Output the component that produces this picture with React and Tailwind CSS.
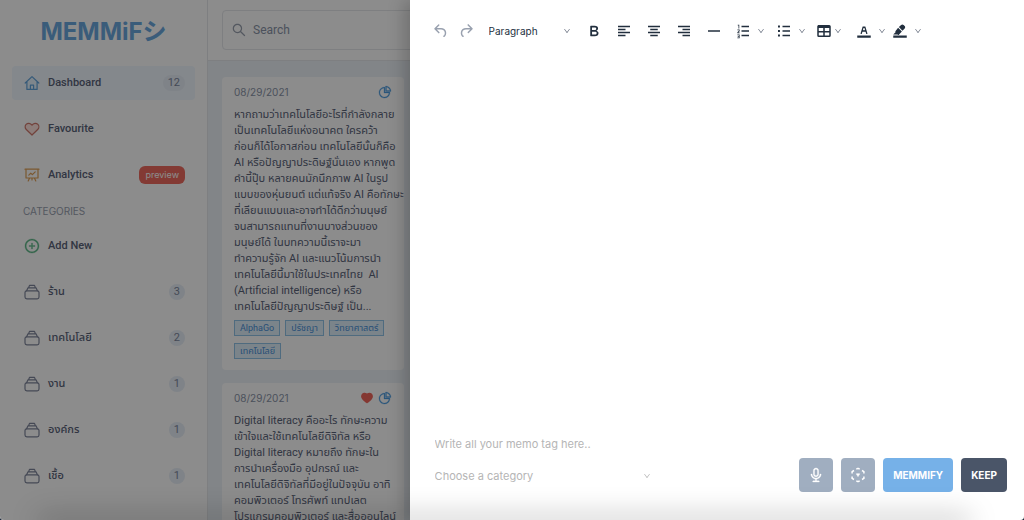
import { AiFillHeart, AiOutlinePlusCircle, AiOutlinePieChart, AiOutlineSearch, AiOutlineDown, AiOutlineAudio } from "react-icons/ai";

const Outline = ({ children, className = "" }) => (
  <svg viewBox="0 0 16 16" className={`w-4 h-4 ${className}`} fill="none" stroke="currentColor" strokeWidth="1.2" strokeLinejoin="round" strokeLinecap="round">
    {children}
  </svg>
);

const HomeIcon = () => (
  <Outline className="text-[#62a4dc]">
    <path d="M3 6.6 8 2l5 4.6v7.6H3z" fill="#e6f4ff" stroke="none" />
    <path d="M1.2 8 8 1.6 14.8 8M2.9 6.8v7.6h10.2V6.8M6.4 14.2v-4h3.2v4" />
  </Outline>
);

const HeartIcon = () => (
  <Outline className="text-[#d0786c]">
    <path d="M8 14 2.3 8.5C.8 7 .8 4.7 2.1 3.4 3.7 1.8 6.5 2 8 4.2 9.5 2 12.3 1.8 13.9 3.4c1.3 1.3 1.3 3.600-.2 5.100z" fill="#ffe4df" />
  </Outline>
);

const ChartIcon = () => (
  <Outline className="text-[#e0a057]">
    <path d="M1 2.2h14M2 2.2h12v8.800H2zM5.600 11l-1.400 3M10.400 11l1.400 3M8 11v2M4.800 8.200l2-2 1.600 1.400 2.800-2.800" />
  </Outline>
);

const StackIcon = () => (
  <Outline className="text-[#7f869c]">
    <rect x="1" y="6.8" width="14" height="8" rx="1.8" />
    <path d="M2.6 6.8 4 3.8h8l1.4 3M4.6 3.8l.9-2.4h5l.9 2.4" />
  </Outline>
);

const menu = [
  { label: "Dashboard", icon: HomeIcon, count: 12, active: true },
  { label: "Favourite", icon: HeartIcon },
  { label: "Analytics", icon: ChartIcon, preview: true },
];

const categories = [
  { label: "ร้าน", count: 3 },
  { label: "เทคโนโลยี", count: 2 },
  { label: "งาน", count: 1 },
  { label: "องค์กร", count: 1 },
  { label: "เชื้อ", count: 1 },
];

const memos = [
  {
    date: "08/29/2021",
    fav: false,
    lines: [
      "หากถามว่าเทคโนโลยีอะไรที่กำลังกลาย",
      "เป็นเทคโนโลยีแห่งอนาคต ใครคว้า",
      "ก่อนก็ได้โอกาสก่อน เทคโนโลยีนั้นก็คือ",
      "AI หรือปัญญาประดิษฐ์นั่นเอง หากพูด",
      "คำนี้ปุ๊บ หลายคนมักนึกภาพ AI ในรูป",
      "แบบของหุ่นยนต์ แต่แท้จริง AI คือทักษะ",
      "ที่เลียนแบบและอาจทำได้ดีกว่ามนุษย์",
      "จนสามารถแทนที่งานบางส่วนของ",
      "มนุษย์ได้ ในบทความนี้เราจะมา",
      "ทำความรู้จัก AI และแนวโน้มการนำ",
      "เทคโนโลยีนี้มาใช้ในประเทศไทย  AI",
      "(Artificial intelligence) หรือ",
      "เทคโนโลยีปัญญาประดิษฐ์ เป็น...",
    ],
    tags: ["AlphaGo", "ปรัชญา", "วิทยาศาสตร์", "เทคโนโลยี"],
  },
  {
    date: "08/29/2021",
    fav: true,
    lines: [
      "Digital literacy คืออะไร ทักษะความ",
      "เข้าใจและใช้เทคโนโลยีดิจิทัล หรือ",
      "Digital literacy หมายถึง ทักษะใน",
      "การนำเครื่องมือ อุปกรณ์ และ",
      "เทคโนโลยีดิจิทัลที่มีอยู่ในปัจจุบัน อาทิ",
      "คอมพิวเตอร์ โทรศัพท์ แทปเลต",
      "โปรแกรมคอมพิวเตอร์ และสื่อออนไลน์",
    ],
    tags: [],
  },
];

const icons = {
  undo: "M6.4 8H12c3.7 0 6.2 2 6.8 5.1.6 2.7-.4 5.6-2.3 6.8a1 1 0 01-1-1.8c1.1-.6 1.8-2.7 1.4-4.6-.5-2.1-2.1-3.5-4.9-3.5H6.4l3.3 3.3a1 1 0 11-1.4 1.4l-5-5a1 1 0 010-1.4l5-5a1 1 0 011.4 1.4L6.4 8z",
  redo: "M17.6 10H12c-2.8 0-4.4 1.4-4.9 3.5-.4 2 .3 4 1.4 4.6a1 1 0 11-1 1.8c-2-1.2-2.9-4.1-2.3-6.8.6-3 3-5.1 6.8-5.1h5.6l-3.3-3.3a1 1 0 111.4-1.4l5 5a1 1 0 010 1.4l-5 5a1 1 0 01-1.4-1.4l3.3-3.3z",
  bold: "M7.8 19c-.3 0-.5 0-.6-.2l-.2-.5V5.7c0-.2 0-.4.2-.5l.6-.2h5c1.5 0 2.7.3 3.5 1 .7.6 1.1 1.4 1.1 2.5a3 3 0 01-.6 1.9c-.4.6-1 1-1.6 1.2.4.1.9.3 1.3.6s.8.7 1 1.2c.4.4.5 1 .5 1.6 0 1.3-.4 2.3-1.3 3-.8.7-2.1 1-3.8 1H7.8zm5-8.3c.6 0 1.2-.1 1.6-.5.4-.3.6-.7.6-1.3 0-1.1-.8-1.7-2.3-1.7H9.3v3.5h3.4zm.5 6c.7 0 1.3-.1 1.7-.4.4-.4.6-.9.6-1.5s-.2-1-.7-1.4c-.4-.3-1-.4-2-.4H9.4v3.8h4z",
  left: "M4 5h16v2H4zM4 9h10v2H4zM4 13h16v2H4zM4 17h10v2H4z",
  center: "M4 5h16v2H4zM7 9h10v2H7zM4 13h16v2H4zM7 17h10v2H7z",
  right: "M4 5h16v2H4zM10 9h10v2H10zM4 13h16v2H4zM10 17h10v2H10z",
  line: "M4 11h16v2H4z",
  ordered: "M10 5h10v2H10zM10 11h10v2H10zM10 17h10v2H10zM5 3.5h2v5H6v-4H5zM4.5 10h3v2.3l-1.7 1.7h1.7v1h-3v-1.3L6.5 11.5V11h-2zM4.5 16.5h3v5h-3v-1h2v-1h-1.5v-1h1.5v-1h-2z",
  bullets: "M10 5h10v2H10zM10 11h10v2H10zM10 17h10v2H10zM4 4.8h2.6v2.6H4zM4 10.7h2.6v2.6H4zM4 16.7h2.6v2.6H4z",
  table: "M19 4a2 2 0 012 2v12a2 2 0 01-2 2H5a2 2 0 01-2-2V6c0-1.1.9-2 2-2h14zM5 14v4h6v-4H5zm14 0h-6v4h6v-4zm0-6h-6v4h6V8zM5 12h6V8H5v4z",
  color: "M3 18h18v3H3zM8.7 16h-.8a.5.5 0 01-.5-.6l2.7-9c.1-.3.3-.4.5-.4h2.8c.2 0 .4.1.5.4l2.7 9a.5.5 0 01-.5.6h-.8a.5.5 0 01-.4-.4l-.7-2.2c0-.3-.3-.4-.5-.4h-3.4c-.2 0-.4.1-.5.4l-.7 2.2c0 .3-.2.4-.4.4zm2.6-7.6l-.6 2a.5.5 0 00.5.6h1.6a.5.5 0 00.5-.6l-.6-2c0-.3-.3-.4-.5-.4h-.4c-.2 0-.4.1-.5.4z",
  marker: "M3 18h18v3H3zM7.7 16.7H3l3.300-3.300-.7-.8L9.500 7.500l5 5-4.300 4.700c-.2.2-.6.2-.8 0l-.6-.7zM10.500 6.800 13.500 4a2.400 2.400 0 013.300 0L18.200 5.300c.9.9.9 2.400 0 3.300l-2.900 3z",
};

const Glyph = ({ icon, className = "text-[#222f3e]" }) => (
  <svg viewBox="0 0 24 24" className={`w-[18px] h-[18px] ${className}`} fill="currentColor">
    <path d={icons[icon]} />
  </svg>
);

const Caret = () => <AiOutlineDown className="w-2 h-2 shrink-0 text-gray-500" />;

const Tool = ({ label, icon, className = "w-[30px]", glyph }) => (
  <button aria-label={label} className={`flex items-center justify-center h-6 ${className}`}>
    <Glyph icon={icon} className={glyph} />
  </button>
);

const MenuTool = ({ label, icon, className = "gap-[5px] px-[5px]" }) => (
  <button aria-label={label} className={`flex items-center h-6 ${className}`}>
    <Glyph icon={icon} />
    <Caret />
  </button>
);

const Count = ({ n }) => (
  <span className="ml-auto min-w-4 px-[5px] h-4 rounded-full bg-[#e8eff7] text-center text-[11px] leading-4 text-[#7d889e]">{n}</span>
);

function Sidebar() {
  return (
    <aside className="w-52 shrink-0 bg-white border-r border-gray-200 px-3 pt-4">
      <h1 className="text-center text-2xl font-bold leading-8 text-[#6aa8de] font-['Inter','Noto_Sans_CJK_JP',sans-serif]">MEMMiFシ</h1>
      <nav className="flex flex-col gap-3 mt-[18px]">
        {menu.map(({ label, icon: MenuIcon, count, active, preview }) => (
          <a key={label} href="#" className={`flex items-center h-[34px] pl-3 pr-2.5 rounded ${active ? "bg-[#f0f7ff]" : ""}`}>
            <MenuIcon />
            <span className="ml-2 text-[11px] font-medium">{label}</span>
            {count && <Count n={count} />}
            {preview && (
              <span className="ml-auto h-[18px] px-1.5 rounded-md bg-[#ee6b60] text-[9px] leading-[18px] text-white font-['Inter',sans-serif]">preview</span>
            )}
          </a>
        ))}
      </nav>
      <p className="mt-[11px] px-[11px] text-[10px] leading-4 text-gray-400 font-['Inter',sans-serif]">CATEGORIES</p>
      <nav className="flex flex-col gap-3 mt-2.5">
        <a href="#" className="flex items-center h-[34px] px-3">
          <AiOutlinePlusCircle className="w-4 h-4 text-[#5cb887]" strokeWidth="20" />
          <span className="ml-2 text-[11px] font-medium">Add New</span>
        </a>
        {categories.map((c) => (
          <a key={c.label} href="#" className="flex items-center h-[34px] pl-3 pr-2.5">
            <StackIcon />
            <span className="ml-2 text-[11px] font-medium">{c.label}</span>
            <Count n={c.count} />
          </a>
        ))}
      </nav>
    </aside>
  );
}

function MemoCard({ memo }) {
  return (
    <article className="px-3 pt-[7px] pb-[11px] bg-white rounded">
      <div className="flex items-center gap-1 h-4">
        <time className="mr-auto text-[10px] text-[#8a94a8] font-['Inter',sans-serif]">{memo.date}</time>
        {memo.fav && <AiFillHeart className="w-3.5 h-3.5 text-[#f0655a]" />}
        <AiOutlinePieChart className="w-3.5 h-3.5 text-[#4d9de0]" strokeWidth="20" />
      </div>
      <p className="mt-[7px] text-[11px] leading-4 whitespace-pre">{memo.lines.join("\n")}</p>
      {memo.tags.length > 0 && (
        <ul className="flex flex-wrap gap-x-[5px] gap-y-[7px] mt-[5px]">
          {memo.tags.map((t) => (
            <li key={t} className="h-4 px-[5px] border border-[#90c4e8] bg-[#e1f0fb] text-[9px] leading-[14px] text-[#4a90d9]">{t}</li>
          ))}
        </ul>
      )}
    </article>
  );
}

function Editor() {
  return (
    <section className="absolute inset-y-0 right-0 w-3/5 flex flex-col bg-white font-['Inter',sans-serif] shadow-[-6px_0_16px_rgba(0,0,0,0.2)]">
      <div className="flex items-center pt-[19px] pl-[19px]">
        <Tool label="Undo" icon="undo" className="w-[25px]" glyph="text-gray-400" />
        <Tool label="Redo" icon="redo" className="w-[25px]" glyph="text-gray-400" />
        <label className="flex items-center w-[100px] pl-2.5 pr-2">
          <select aria-label="Block format" className="w-full appearance-none bg-transparent text-[10px] text-[#222f3e] outline-none">
            <option>Paragraph</option>
          </select>
          <Caret />
        </label>
        <Tool label="Bold" icon="bold" />
        <Tool label="Align left" icon="left" />
        <Tool label="Align center" icon="center" />
        <Tool label="Align right" icon="right" />
        <Tool label="Horizontal line" icon="line" />
        <MenuTool label="Numbered list" icon="ordered" />
        <MenuTool label="Bullet list" icon="bullets" />
        <MenuTool label="Table" icon="table" className="gap-px px-1" />
        <MenuTool label="Text color" icon="color" className="gap-[5px] pl-[9px] pr-[5px]" />
        <MenuTool label="Highlight color" icon="marker" className="gap-[5px]" />
      </div>
      <textarea aria-label="Memo" className="flex-1 mx-[25px] my-3 resize-none outline-none" />
      <div className="flex items-end justify-between pl-[25px] pr-[17px] pb-7">
        <div className="w-[216px] text-[11px] text-[#b5b5b5]">
          <input aria-label="Memo tags" placeholder="Write all your memo tag here.." className="block w-full h-8 outline-none placeholder:text-[#b5b5b5]" />
          <label className="flex items-center h-8">
            <select aria-label="Category" className="flex-1 appearance-none bg-transparent outline-none">
              <option>Choose a category</option>
            </select>
            <AiOutlineDown className="w-2 h-2" />
          </label>
        </div>
        <div className="flex gap-2 text-[10px] font-bold text-white">
          <button aria-label="Record" className="flex items-center justify-center w-[34px] h-[34px] rounded bg-[#a0aec0]">
            <AiOutlineAudio className="w-4 h-4" strokeWidth="20" />
          </button>
          <button aria-label="Scan" className="flex items-center justify-center w-[34px] h-[34px] rounded bg-[#a0aec0]">
            <svg viewBox="0 0 16 16" className="w-4 h-4" fill="none" stroke="currentColor" strokeWidth="1.5" strokeLinejoin="round">
              <path d="M6.3 2.2 8 1.3l1.7.9M12 3.5l1.900 1.100v2M13.900 9.400v2L12 12.500M9.700 13.800 8 14.700l-1.700-.9M4 12.500l-1.900-1.100v-2M2.100 6.600v-2L4 3.500" />
              <path d="M6.300 6.800h3.400L8 9.600z" fill="currentColor" strokeWidth=".6" />
            </svg>
          </button>
          <button className="h-[34px] px-2.5 rounded bg-[#76b1e8]">MEMMIFY</button>
          <button className="h-[34px] px-2.5 rounded bg-[#4a5568]">KEEP</button>
        </div>
      </div>
    </section>
  );
}

export default function App() {
  return (
    <div className="bg-gray-800">
      <div className="relative h-screen flex overflow-hidden rounded-b bg-[#edf2f7] text-[#5a6379] font-['Roboto','Noto_Sans_Thai',sans-serif]">
        <Sidebar />
        <main className="flex-1 min-w-0">
          <header className="bg-white border-b border-gray-200 px-3.5 py-2.5">
            <label className="flex items-center h-10 px-2 gap-1.5 border border-gray-200 rounded">
              <AiOutlineSearch className="w-4 h-4 text-gray-400" />
              <input aria-label="Search" placeholder="Search" className="flex-1 text-xs outline-none placeholder:text-[#8a94a8]" />
            </label>
          </header>
          <div className="grid grid-cols-4 gap-5 px-3.5 pt-4">
            <div className="flex flex-col gap-[13px]">
              {memos.map((m, i) => (
                <MemoCard key={i} memo={m} />
              ))}
            </div>
          </div>
        </main>
        {/* mask behind the drawer */}
        <div className="absolute inset-0 bg-black/45" />
        <Editor />
        <div className="absolute -bottom-1 left-10 right-14 h-1 shadow-[0_0_28px_2px_rgba(0,0,0,0.4)]" />
      </div>
    </div>
  );
}
